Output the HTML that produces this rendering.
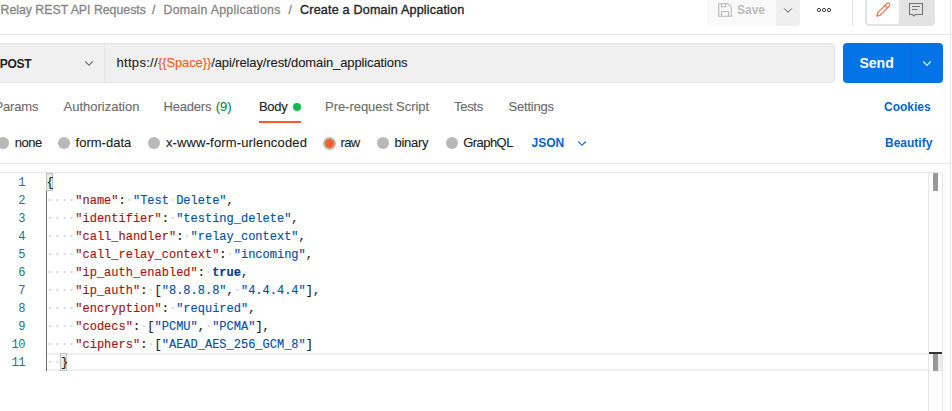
<!DOCTYPE html>
<html><head><meta charset="utf-8">
<style>
*{box-sizing:border-box;margin:0;padding:0}
html,body{width:952px;height:411px;overflow:hidden;background:#fff;font-family:"Liberation Sans",sans-serif;color:#212121}
.abs{position:absolute}
svg{position:absolute;overflow:visible}
#hline1{left:0;top:34px;width:950px;height:1px;background:#e6e6e6}
#vline{left:950px;top:0;width:1px;height:411px;background:#e6e6e6}
#crumb{left:0;top:1.5px;font-size:13px;line-height:16px;white-space:nowrap}
.g{color:#858585;position:absolute;top:0;white-space:nowrap;font-size:12.3px;-webkit-text-stroke:0.3px #858585}
.cur{color:#242424;font-size:12.6px;-webkit-text-stroke:0.35px #242424;letter-spacing:0.18px;position:absolute;top:0.5px;white-space:nowrap}
#save{left:707px;top:0;width:68.5px;height:26px;background:#f9f9f9;border-radius:0 0 3px 4px}
#savedd{left:776px;top:0;width:24px;height:26px;background:#efefef;border-radius:0 0 4px 0}
#savetxt{left:737px;top:2.3px;font-size:12px;line-height:16px;font-weight:bold;color:#bcbcbc}
#vsep{left:852px;top:0;width:1px;height:26px;background:#e6e6e6}
#tog{left:865px;top:0;width:70px;height:26px;background:#e3e3e3;border-radius:0 0 4px 4px}
#tog1{left:867px;top:0;width:32px;height:24px;background:#fff;border-radius:0 0 3px 3px}

#req{left:-4px;top:43px;width:839px;height:40px;background:#f0f0f0;border:1px solid #e2e2e2;border-radius:4px}
#method{left:-0.3px;top:56px;font-size:12px;font-weight:bold;color:#212121;line-height:16px;letter-spacing:-0.3px}
#mdiv{left:104px;top:44px;width:1px;height:38px;background:#e4e4e4}
#url{left:116.5px;top:54.5px;font-size:13px;line-height:16px;color:#212121;white-space:nowrap;-webkit-text-stroke:0.1px currentColor}
#url .v{color:#f05a28}
#send{left:843px;top:43px;width:100px;height:40px;background:#0274e6;border-radius:4px}
#sendtxt{left:859.5px;top:55px;font-size:14px;font-weight:bold;color:#fff;line-height:16px}
#senddiv{left:910px;top:43px;width:1px;height:40px;background:#0566d0}

.tab{position:absolute;top:99px;font-size:13px;line-height:16px;color:#6b6b6b;white-space:nowrap;-webkit-text-stroke:0.12px currentColor}
.tab .n{color:#0a8540}
#bodyul{left:259px;top:121px;width:42px;height:2px;background:#fc5a2a}
#dot{left:293px;top:103px;width:8px;height:8px;border-radius:50%;background:#0cbb52}
#cookies{left:884px;top:98.5px;font-size:12px;font-weight:bold;color:#0265d2;line-height:16px}

.radio{position:absolute;top:137px;width:12px;height:12px;border-radius:50%;background:#b8b8b8}
.rl{position:absolute;top:134.5px;font-size:13px;line-height:16px;color:#212121;white-space:nowrap;-webkit-text-stroke:0.1px currentColor}
#json{left:531.5px;top:134.5px;font-size:12px;font-weight:bold;color:#0265d2;line-height:16px}
#beautify{left:885px;top:134.5px;font-size:12px;font-weight:bold;color:#0265d2;line-height:16px}
#hline2{left:0;top:163px;width:950px;height:1px;background:#e6e6e6}

#editor{left:-4px;top:172px;width:947px;height:250px;border:1px solid #e6e6e6;border-radius:4px}
#sbtrack{left:928px;top:173px;width:1px;height:240px;background:#e6e6e6}
#thumb1{left:933px;top:173px;width:5px;height:18px;background:#999}
#thumb2{left:933px;top:353px;width:5px;height:18px;background:#999}
#curmark{left:929px;top:352px;width:13px;height:2px;background:#333}
#curline{left:47px;top:353px;width:881px;height:18px;border-top:2px solid #eeeeee;border-bottom:2px solid #eeeeee}
#guide{left:46px;top:191px;width:1px;height:180px;background:#6b6b6b}
.bm{position:absolute;background:#e3efe3;border:1px solid #c3c3c3;width:7px;height:18px}
.ln{position:absolute;left:0;width:25px;text-align:right;font-family:"Liberation Mono",monospace;font-size:12px;line-height:18px;color:#237289;letter-spacing:-0.5px;padding-top:0.5px}
.code{position:absolute;left:46.5px;font-family:"Liberation Mono",monospace;font-size:12px;line-height:18px;white-space:pre;color:#212121;padding-top:0.7px;-webkit-text-stroke:0.15px currentColor}
.k{color:#a31515}
.s{color:#0451a5}
.d{color:#d2d2d2}
.b{color:#0b3c8a;font-weight:bold}
</style></head><body>
<div id="hline1" class="abs"></div>
<div id="vline" class="abs"></div>
<div id="crumb" class="abs">
<span class="g" style="left:0.5px">Relay REST API Requests</span>
<span class="g" style="left:152px">/</span>
<span class="g" style="left:163.5px;letter-spacing:0.3px">Domain Applications</span>
<span class="g" style="left:288.5px">/</span>
<span class="cur" style="left:300px">Create a Domain Application</span>
</div>

<div id="save" class="abs"></div>
<div id="savedd" class="abs"></div>
<svg style="left:718px;top:3px" width="14" height="14" viewBox="0 0 14 14"><path d="M0.7 0.7H9.8L13.3 4.2V13.3H0.7Z M3.5 0.7V3.8H7.7V0.7 M3.5 13.3V8.5H10.5V13.3" fill="none" stroke="#b8b8b8" stroke-width="1.1"/></svg>
<div id="savetxt" class="abs">Save</div>
<svg style="left:784px;top:7.5px" width="8" height="5" viewBox="0 0 8 5"><path d="M0.3 0.5L4 4.3L7.7 0.5" fill="none" stroke="#4a4a4a" stroke-width="0.95"/></svg>
<svg style="left:817px;top:8px" width="14" height="4" viewBox="0 0 14 4"><circle cx="2" cy="2" r="1.6" fill="none" stroke="#3c3c3c" stroke-width="1"/><circle cx="7" cy="2" r="1.6" fill="none" stroke="#3c3c3c" stroke-width="1"/><circle cx="12" cy="2" r="1.6" fill="none" stroke="#3c3c3c" stroke-width="1"/></svg>
<div id="vsep" class="abs"></div>
<div id="tog" class="abs"></div>
<div id="tog1" class="abs"></div>
<svg style="left:0;top:0" width="952" height="30" viewBox="0 0 952 30"><g transform="translate(876.8 16.2) rotate(-45)"><path d="M0 0L3.2 -1.8H15.9A1.8 1.8 0 0 1 15.9 1.8H3.2Z M13.5 -1.8V1.8" fill="none" stroke="#f4653a" stroke-width="1.05" stroke-linejoin="round"/></g></svg>
<svg style="left:909px;top:3px" width="14" height="14" viewBox="0 0 14 14"><path d="M0.5 0.5H13.5V11.5H6.5L5 13L3.5 11.5H0.5Z M3 3.5H11 M3 6.5H8.5" fill="none" stroke="#767676" stroke-width="1.1"/></svg>

<div id="req" class="abs"></div>
<div id="mdiv" class="abs"></div>
<div id="method" class="abs">POST</div>
<svg style="left:85px;top:61px" width="8" height="5" viewBox="0 0 8 5"><path d="M0.3 0.5L4 4.3L7.7 0.5" fill="none" stroke="#6b6b6b" stroke-width="1.1"/></svg>
<div id="url" class="abs" style="letter-spacing:-0.11px"><span style="letter-spacing:0.3px">https://</span><span class="v">{{Space}}</span>/api/relay/rest/domain_applications</div>
<div id="send" class="abs"></div>
<div id="senddiv" class="abs"></div>
<div id="sendtxt" class="abs">Send</div>
<svg style="left:923px;top:60.5px" width="8" height="5" viewBox="0 0 8 5"><path d="M0.3 0.5L4 4.3L7.7 0.5" fill="none" stroke="#fff" stroke-width="1.1"/></svg>

<div class="tab" style="left:-5.5px;letter-spacing:-0.15px">Params</div>
<div class="tab" style="left:63.5px">Authorization</div>
<div class="tab" style="left:163.5px;letter-spacing:-0.2px">Headers <span class="n" style="margin-left:1px;letter-spacing:0">(9)</span></div>
<div class="tab" style="left:259px;color:#212121;letter-spacing:-0.3px">Body</div>
<div id="dot" class="abs"></div>
<div class="tab" style="left:325px;letter-spacing:-0.04px">Pre-request Script</div>
<div class="tab" style="left:454px;letter-spacing:-0.3px">Tests</div>
<div class="tab" style="left:508.5px;letter-spacing:-0.2px">Settings</div>
<div id="bodyul" class="abs"></div>
<div id="cookies" class="abs">Cookies</div>

<div class="radio" style="left:-3.3px"></div><div class="rl" style="left:14.8px;letter-spacing:-0.5px">none</div>
<div class="radio" style="left:58px"></div><div class="rl" style="left:75.6px">form-data</div>
<div class="radio" style="left:148px"></div><div class="rl" style="left:165.9px;letter-spacing:0.15px">x-www-form-urlencoded</div>
<div class="radio" style="left:322.8px;background:#ff5f2e;border:2.9px solid #b8b8b8;width:13px;height:13px;top:136.6px"></div><div class="rl" style="left:340.5px;letter-spacing:-0.6px">raw</div>
<div class="radio" style="left:377px"></div><div class="rl" style="left:394.5px;letter-spacing:-0.3px">binary</div>
<div class="radio" style="left:446.2px"></div><div class="rl" style="left:463.2px;letter-spacing:-0.55px">GraphQL</div>
<div id="json" class="abs">JSON</div>
<svg style="left:578px;top:141px" width="8" height="5" viewBox="0 0 8 5"><path d="M0.3 0.5L4 4.3L7.7 0.5" fill="none" stroke="#0265d2" stroke-width="1.1"/></svg>
<div id="beautify" class="abs">Beautify</div>
<div id="hline2" class="abs"></div>

<div id="editor" class="abs"></div>
<div id="curline" class="abs"></div>
<div id="sbtrack" class="abs"></div>
<div id="thumb1" class="abs"></div>
<div id="thumb2" class="abs"></div>
<div id="curmark" class="abs"></div><div class="abs" style="left:938px;top:354px;width:4px;height:17px;background:#ececec"></div>
<div id="guide" class="abs"></div>
<div class="bm" style="left:46px;top:173px"></div>
<div class="bm" style="left:60px;top:353px"></div>

<div class="ln" style="top:173px">1</div>
<div class="ln" style="top:191px">2</div>
<div class="ln" style="top:209px">3</div>
<div class="ln" style="top:227px">4</div>
<div class="ln" style="top:245px">5</div>
<div class="ln" style="top:263px">6</div>
<div class="ln" style="top:281px">7</div>
<div class="ln" style="top:299px">8</div>
<div class="ln" style="top:317px">9</div>
<div class="ln" style="top:335px">10</div>
<div class="ln" style="top:353px">11</div>

<div class="code" style="top:173px">{</div>
<div class="code" style="top:191px"><span class="d">····</span><span class="k">"name"</span>:<span class="d">·</span><span class="s">"Test<span class="d">·</span>Delete"</span>,</div>
<div class="code" style="top:209px"><span class="d">····</span><span class="k">"identifier"</span>:<span class="d">·</span><span class="s">"testing_delete"</span>,</div>
<div class="code" style="top:227px"><span class="d">····</span><span class="k">"call_handler"</span>:<span class="d">·</span><span class="s">"relay_context"</span>,</div>
<div class="code" style="top:245px"><span class="d">····</span><span class="k">"call_relay_context"</span>:<span class="d">·</span><span class="s">"incoming"</span>,</div>
<div class="code" style="top:263px"><span class="d">····</span><span class="k">"ip_auth_enabled"</span>:<span class="d">·</span><span class="b">true</span>,</div>
<div class="code" style="top:281px"><span class="d">····</span><span class="k">"ip_auth"</span>:<span class="d">·</span>[<span class="s">"8.8.8.8"</span>,<span class="d">·</span><span class="s">"4.4.4.4"</span>],</div>
<div class="code" style="top:299px"><span class="d">····</span><span class="k">"encryption"</span>:<span class="d">·</span><span class="s">"required"</span>,</div>
<div class="code" style="top:317px"><span class="d">····</span><span class="k">"codecs"</span>:<span class="d">·</span>[<span class="s">"PCMU"</span>,<span class="d">·</span><span class="s">"PCMA"</span>],</div>
<div class="code" style="top:335px"><span class="d">····</span><span class="k">"ciphers"</span>:<span class="d">·</span>[<span class="s">"AEAD_AES_256_GCM_8"</span>]</div>
<div class="code" style="top:353px"><span class="d">··</span>}</div>
</body></html>
